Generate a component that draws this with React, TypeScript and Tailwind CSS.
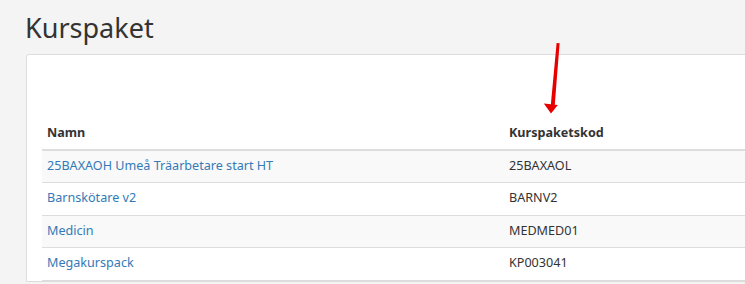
const packages = [
  { name: "25BAXAOH Umeå Träarbetare start HT", code: "25BAXAOL" },
  { name: "Barnskötare v2", code: "BARNV2" },
  { name: "Medicin", code: "MEDMED01" },
  { name: "Megakurspack", code: "KP003041" },
];

export default function App() {
  return (
    <div
      className="relative h-[284px] w-[745px] overflow-hidden bg-[#f4f4f4] text-[#333]"
      style={{ fontFamily: '"Noto Sans", "Open Sans", sans-serif' }}
    >
      <h1 className="pl-[25px] pt-[10px] text-[27px] leading-[36px] font-normal text-[#333]">
        Kurspaket
      </h1>

      {/* Panel with package list */}
      <div className="ml-[26px] mt-[8px] w-[800px] rounded-tl-[3px] border border-[#ddd] bg-white px-[15px] pt-[63px]">
        <table className="w-full border-collapse text-[12.6px]">
          <thead>
            <tr className="h-[32px] border-b-2 border-[#ddd] text-left">
              <th className="w-[462px] px-[5px] font-bold">Namn</th>
              <th className="px-[5px] font-bold">Kurspaketskod</th>
            </tr>
          </thead>
          <tbody>
            {packages.map((p, i) => (
              <tr
                key={p.code}
                className={`h-[32.5px] border-b border-[#ddd] ${i % 2 === 0 ? "bg-[#f9f9f9]" : "bg-white"}`}
              >
                <td className="px-[5px] text-[#337ab7]">{p.name}</td>
                <td className="px-[5px]">{p.code}</td>
              </tr>
            ))}
          </tbody>
        </table>
      </div>

      {/* Red pointer arrow */}
      <svg
        className="pointer-events-none absolute left-[540px] top-[40px]"
        width="24"
        height="78"
        viewBox="0 0 24 78"
      >
        <path d="M16.6 3 L19.6 3.3 L14.6 67 L10.6 67 Z" fill="#e60000" />
        <path d="M3.8 63.5 L17.8 65 L11 73.5 Z" fill="#e60000" />
      </svg>
    </div>
  );
}
